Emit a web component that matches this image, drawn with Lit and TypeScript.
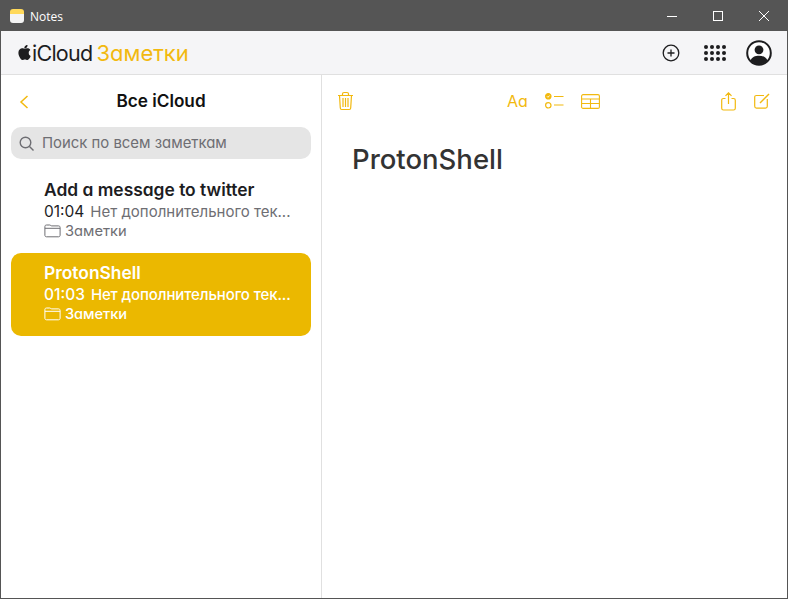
import { LitElement, html, css, svg } from "lit";
import { customElement } from "lit/decorators.js";

const folder = svg`<svg class="folder" width="17" height="14" viewBox="0 0 17 14" fill="none" stroke="currentColor" stroke-width="1"><path d="M.9 11.2V2.6C.9 1.6 1.5 1 2.5 1h3.2c.9 0 1.2.9 2 .9h6.800c1 0 1.600.6 1.600 1.600v7.700c0 1-.6 1.600-1.600 1.600H2.500c-1 0-1.600-.6-1.600-1.600Z"/><path d="M.9 4.300h15.200"/></svg>`;

@customElement("app-root")
export class AppRoot extends LitElement {
  static styles = css`
    :host { display: block; width: 788px; height: 599px; font-family: Inter, "Noto Sans", sans-serif; font-feature-settings: "cv11"; }
    * { box-sizing: border-box; }
    .win { width: 788px; height: 599px; border: 1px solid #555; display: flex; flex-direction: column; background: #fff; overflow: hidden; }
    .title { height: 30px; flex: none; background: #555; display: flex; align-items: center; color: #fff; font: 12px "Open Sans", "Noto Sans", sans-serif; padding-left: 9px; gap: 6px; }
    .appicon { width: 14px; height: 14px; border-radius: 3px; background: linear-gradient(#ffd95a 0 35%, #f4f4f4 35% 100%); }
    .grow { flex: 1; }
    .controls { display: flex; }
    .wc { width: 46px; height: 30px; display: flex; align-items: center; justify-content: center; }
    .wc svg { display: block; }
    .head { height: 44px; flex: none; background: #f5f5f7; border-bottom: 1px solid #e0e0e0; display: flex; align-items: center; padding: 0 15px 0 16px; }
    .brand { display: flex; align-items: center; font-size: 21.5px; letter-spacing: -0.75px; color: #1d1d1f; }
    .brand .apple { margin-right: 1px; }
    .brand .y { color: #f2b90f; margin-left: 4px; font-size: 22px; letter-spacing: 0; }
    .hicons { display: flex; align-items: center; }
    .plus { margin-right: 24px; }
    .dots { margin-right: 20px; display: grid; grid-template-columns: repeat(4, 4px); gap: 2px; }
    .dots i { width: 4px; height: 4px; border-radius: 50%; background: #1d1d1f; }
    .body { flex: 1; display: flex; min-height: 0; }
    .side { width: 321px; flex: none; border-right: 1px solid #e0e0e0; padding: 0 10px; }
    .navrow { height: 52px; padding-bottom: 1px; display: flex; align-items: center; justify-content: center; position: relative; font-size: 17.2px; font-weight: 600; color: #111; }
    .back { position: absolute; left: 8px; top: 20px; }
    .search { height: 32px; border-radius: 10px; background: #e5e5e5; display: flex; align-items: center; padding-left: 7px; gap: 7px; font-size: 14.9px; color: #6e6e73; }
    .note { height: 83px; padding: 10px 10px 0 33px; border-radius: 10px; color: #1d1d1f; }
    .note.first { margin-top: 11px; }
    .note.sel { background: #ebb800; color: #fff; }
    .n1 { font-size: 17.4px; font-weight: 600; line-height: 20px; height: 22px; white-space: nowrap; }
    .n2 { display: flex; font-size: 15px; line-height: 20px; height: 19px; white-space: nowrap; gap: 6px; }
    .n2 .t { color: #1d1d1f; font-size: 15.5px; }
    .n2 .d { color: #6e6e73; }
    .n3 { display: flex; align-items: center; gap: 4px; font-size: 14.7px; line-height: 20px; color: #6e6e73; }
    .folder { display: block; flex: none; }
    .sel .t, .sel .d, .sel .n3 { color: #fff; font-weight: 500; }
    .sel .d { letter-spacing: -0.12px; }
    .sel .n3 { letter-spacing: -0.1px; }
    .main { flex: 1; padding: 0 17px 0 15px; min-width: 0; }
    .tools { height: 52px; display: flex; align-items: center; color: #f2b90f; }
    .tools svg { display: block; }
    .c { margin-left: 153px; display: flex; align-items: center; gap: 17px; }
    .aa { font-size: 16px; width: 21px; font-weight: 400; color: #f2b90f; }
    .r { display: flex; align-items: center; gap: 18px; }
    h1 { margin: 14px 0 0 15px; font-size: 27.5px; font-weight: 500; line-height: 36px; color: #333; }
  `;

  note(title: string, time: string, desc: string, cls: string) {
    return html`<div class="note ${cls}">
      <div class="n1">${title}</div>
      <div class="n2"><span class="t">${time}</span><span class="d">${desc}</span></div>
      <div class="n3">${folder}<span>Заметки</span></div>
    </div>`;
  }

  render() {
    return html`<div class="win">
      <div class="title">
        <div class="appicon"></div><span>Notes</span><div class="grow"></div>
        <div class="controls">
          <div class="wc"><svg width="10" height="10" viewBox="0 0 10 10"><path d="M0 5.5h10" stroke="#fff"/></svg></div>
          <div class="wc"><svg width="10" height="10" viewBox="0 0 10 10" fill="none"><rect x=".5" y=".5" width="9" height="9" stroke="#fff"/></svg></div>
          <div class="wc"><svg width="10" height="10" viewBox="0 0 10 10" fill="none"><path d="M0 0l10 10M10 0L0 10" stroke="#fff"/></svg></div>
        </div>
      </div>
      <div class="head">
        <div class="brand">
          <svg class="apple" width="14" height="17" viewBox="0 0 14 17" fill="#1d1d1f"><path d="M10.5 1c.1 1-.3 1.900-.8 2.500-.6.700-1.500 1.200-2.400 1.100-.1-.9.3-1.900.8-2.500C8.700 1.400 9.700.9 10.500 1ZM13.300 6.100c-.1.100-1.600.9-1.600 2.800 0 2.200 1.900 3 2 3-.1.200-.4 1.200-1 2.200-.7 1-1.300 1.900-2.300 1.900s-1.300-.6-2.500-.6-1.500.6-2.400.6c-1 0-1.700-.9-2.400-2C2.200 12.700 1.400 10.700 1.400 8.800c0-3 2-4.600 3.900-4.600 1 0 1.900.7 2.500.7.600 0 1.600-.7 2.800-.7.400 0 2 0 2.700 1.900Z"/></svg>
          <span>iCloud</span><span class="y">Заметки</span>
        </div>
        <div class="grow"></div>
        <div class="hicons">
          <svg class="plus" width="18" height="18" viewBox="0 0 18 18" fill="none" stroke="#1d1d1f" stroke-width="1.300"><circle cx="9" cy="9" r="7.800"/><path d="M9 5.500v7M5.500 9h7"/></svg>
          <div class="dots">${Array.from({ length: 12 }, () => html`<i></i>`)}</div>
          <svg width="26" height="26" viewBox="0 0 26 26"><circle cx="13" cy="13" r="11.800" fill="#fff" stroke="#1d1d1f" stroke-width="2"/><circle cx="13" cy="9.800" r="4.400" fill="#1d1d1f"/><path d="M4.500 20.500C6 17 9 15.800 13 15.800s7 1.200 8.500 4.700C19.500 23 16.500 24.500 13 24.500s-6.500-1.500-8.500-4Z" fill="#1d1d1f"/></svg>
        </div>
      </div>
      <div class="body">
        <div class="side">
          <div class="navrow">
            <svg class="back" width="10" height="14" viewBox="0 0 10 14" fill="none" stroke="#f2b90f" stroke-width="1.500"><path d="M8.500 1L2 7l6.500 6"/></svg>
            Все iCloud
          </div>
          <div class="search">
            <svg width="17" height="17" viewBox="0 0 17 17" fill="none" stroke="#6e6e73" stroke-width="1.400"><circle cx="7.500" cy="7.500" r="5.300"/><path d="M11.500 11.500l4 4"/></svg>
            <span>Поиск по всем заметкам</span>
          </div>
          ${this.note("Add a message to twitter", "01:04", "Нет дополнительного тек...", "first")}
          ${this.note("ProtonShell", "01:03", "Нет дополнительного тек...", "sel")}
        </div>
        <div class="main">
          <div class="tools">
            <svg width="17" height="20" viewBox="0 0 17 20" fill="none" stroke="currentColor" stroke-width="1.200"><path d="M1 4.500h15M5.500 4.500V3c0-1 .6-1.500 1.500-1.500h3c.9 0 1.500.5 1.500 1.500v1.500M2.500 4.500l.8 12.500c0 1 .7 1.500 1.500 1.500h7.400c.8 0 1.500-.5 1.500-1.500l.8-12.500M6 7v9M8.500 7v9M11 7v9"/></svg>
            <div class="c">
              <span class="aa">Aɑ</span>
              <svg width="19" height="16" viewBox="0 0 19 16" fill="none" stroke="currentColor" stroke-width="1.200"><circle cx="3.300" cy="3.300" r="2.700" fill="currentColor"/><path d="M2 3.300l1 1 1.600-1.800" stroke="#fff" stroke-width=".9"/><circle cx="3.300" cy="12.300" r="2.700"/><path d="M9 3.500h9.500M9 12h9.500"/></svg>
              <svg width="19" height="15" viewBox="0 0 19 15" fill="none" stroke="currentColor" stroke-width="1.100"><rect x=".6" y=".6" width="17.800" height="13.800" rx="1.500"/><path d="M.6 5h17.800M.6 9.500h17.800M9.500 5v9.500" /></svg>
            </div>
            <div class="grow"></div>
            <div class="r">
              <svg width="15" height="19" viewBox="0 0 15 19" fill="none" stroke="currentColor" stroke-width="1.200"><path d="M4.500 6.500H2.500C1.300 6.500.7 7.100.7 8.300v7.900c0 1.200.6 1.800 1.800 1.800h10c1.200 0 1.800-.6 1.800-1.800V8.300c0-1.200-.6-1.800-1.800-1.800h-2M7.500 12V1M4.500 3.800l3-3 3 3"/></svg>
              <svg width="16" height="16" viewBox="0 0 16 16" fill="none" stroke="currentColor" stroke-width="1.200"><path d="M10 2.500H2.500C1.300 2.500.7 3.100.7 4.300v9c0 1.200.6 1.800 1.800 1.800h9c1.200 0 1.800-.6 1.800-1.800V6"/><path d="M6 10l9-9" stroke-width="1.500"/></svg>
            </div>
          </div>
          <h1>ProtonShell</h1>
        </div>
      </div>
    </div>`;
  }
}
